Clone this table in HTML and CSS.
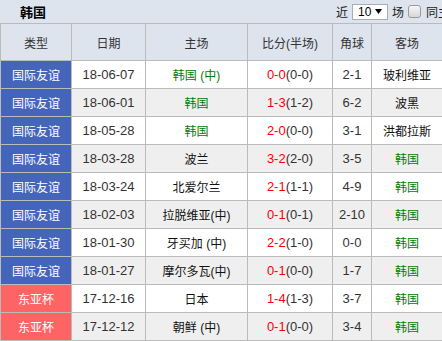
FILE: index.html
```html
<!DOCTYPE html>
<html lang="zh-CN">
<head>
<meta charset="utf-8">
<title>韩国</title>
<link rel="stylesheet" href="styles.css">
</head>
<body>
<div class="page">
  <div class="toolbar">
    <div class="title">韩国</div>
    <div class="options">
      <span>近</span>
      <span class="select"><span class="select-val">10</span><svg class="caret" width="7" height="5" viewBox="0 0 7 5"><polygon points="0,0 7,0 3.5,5" fill="#000"/></svg></span>
      <span>场</span>
      <span class="checkbox"></span>
      <span>同主场</span>
    </div>
  </div>
  <table class="matches">
    <colgroup>
      <col class="c-type"><col class="c-date"><col class="c-home"><col class="c-score"><col class="c-corner"><col class="c-away">
    </colgroup>
    <thead>
      <tr><th>类型</th><th>日期</th><th>主场</th><th>比分(半场)</th><th>角球</th><th>客场</th></tr>
    </thead>
    <tbody>
      <tr><td class="type friendly">国际友谊</td><td class="date">18-06-07</td><td class="team hl">韩国 (中)</td><td class="score"><span class="ft">0-0</span>(0-0)</td><td class="corner">2-1</td><td class="team">玻利维亚</td></tr>
      <tr class="alt"><td class="type friendly">国际友谊</td><td class="date">18-06-01</td><td class="team hl">韩国</td><td class="score"><span class="ft">1-3</span>(1-2)</td><td class="corner">6-2</td><td class="team">波黑</td></tr>
      <tr><td class="type friendly">国际友谊</td><td class="date">18-05-28</td><td class="team hl">韩国</td><td class="score"><span class="ft">2-0</span>(0-0)</td><td class="corner">3-1</td><td class="team">洪都拉斯</td></tr>
      <tr class="alt"><td class="type friendly">国际友谊</td><td class="date">18-03-28</td><td class="team">波兰</td><td class="score"><span class="ft">3-2</span>(2-0)</td><td class="corner">3-5</td><td class="team hl">韩国</td></tr>
      <tr><td class="type friendly">国际友谊</td><td class="date">18-03-24</td><td class="team">北爱尔兰</td><td class="score"><span class="ft">2-1</span>(1-1)</td><td class="corner">4-9</td><td class="team hl">韩国</td></tr>
      <tr class="alt"><td class="type friendly">国际友谊</td><td class="date">18-02-03</td><td class="team">拉脱维亚(中)</td><td class="score"><span class="ft">0-1</span>(0-1)</td><td class="corner">2-10</td><td class="team hl">韩国</td></tr>
      <tr><td class="type friendly">国际友谊</td><td class="date">18-01-30</td><td class="team">牙买加 (中)</td><td class="score"><span class="ft">2-2</span>(1-0)</td><td class="corner">0-0</td><td class="team hl">韩国</td></tr>
      <tr class="alt"><td class="type friendly">国际友谊</td><td class="date">18-01-27</td><td class="team">摩尔多瓦(中)</td><td class="score"><span class="ft">0-1</span>(0-0)</td><td class="corner">1-7</td><td class="team hl">韩国</td></tr>
      <tr><td class="type eaff">东亚杯</td><td class="date">17-12-16</td><td class="team">日本</td><td class="score"><span class="ft">1-4</span>(1-3)</td><td class="corner">3-7</td><td class="team hl">韩国</td></tr>
      <tr class="alt"><td class="type eaff">东亚杯</td><td class="date">17-12-12</td><td class="team">朝鲜 (中)</td><td class="score"><span class="ft">0-1</span>(0-0)</td><td class="corner">3-4</td><td class="team hl">韩国</td></tr>
    </tbody>
  </table>
</div>
</body>
</html>
```
FILE: styles.css
```css
html, body {
  margin: 0;
  padding: 0;
  background: #dde4ee;
  overflow: hidden;
}
body {
  font-family: "Liberation Sans", "Noto Sans CJK SC", sans-serif;
  font-size: 12px;
  color: #333;
}
.page {
  width: 443px;
}
.toolbar {
  display: flex;
  align-items: center;
  height: 23px;
  white-space: nowrap;
}
.title {
  flex: 0 0 336px;
  box-sizing: border-box;
  padding-left: 20px;
  font-size: 13px;
  font-weight: bold;
  color: #000;
}
.options {
  display: flex;
  align-items: center;
  gap: 4px;
  flex-shrink: 0;
  color: #222;
}
.select {
  display: flex;
  align-items: center;
  justify-content: space-between;
  box-sizing: border-box;
  width: 36px;
  height: 16px;
  padding: 0 5px 0 5px;
  background: #fff;
  border: 1px solid #a8aeb6;
  color: #000;
  font-size: 12px;
}
.checkbox {
  display: inline-block;
  box-sizing: border-box;
  width: 13px;
  height: 13px;
  margin-right: 1px;
  border: 1px solid #9a9a9a;
  border-radius: 3px;
  background: linear-gradient(#f6f6f6, #d8d8d8);
}
.matches {
  border-collapse: separate;
  border-spacing: 1px;
  background: #bbbbbb;
  table-layout: fixed;
  width: 443px;
}
.c-type { width: 70px; }
.c-date { width: 73px; }
.c-home { width: 101px; }
.c-score { width: 84px; }
.c-corner { width: 38px; }
.c-away { width: 70px; }
.matches th,
.matches td {
  padding: 0;
  text-align: center;
  white-space: nowrap;
  overflow: hidden;
}
.matches th {
  height: 36px;
  background: #dde4ee;
  font-weight: normal;
  color: #333;
}
.matches td {
  height: 27px;
  background: #fff;
}
.matches tr.alt td {
  background: #efefef;
}
.matches tr td.type {
  color: #fff;
}
.matches tr td.friendly {
  background: #4565ba;
}
.matches tr td.eaff {
  background: #ff6464;
}
.matches td.date,
.matches td.corner,
.matches td.score {
  color: #333;
  font-size: 13px;
}
.team {
  color: #111;
}
.team.hl {
  color: #008000;
}
.ft {
  color: #ff0000;
}
```
